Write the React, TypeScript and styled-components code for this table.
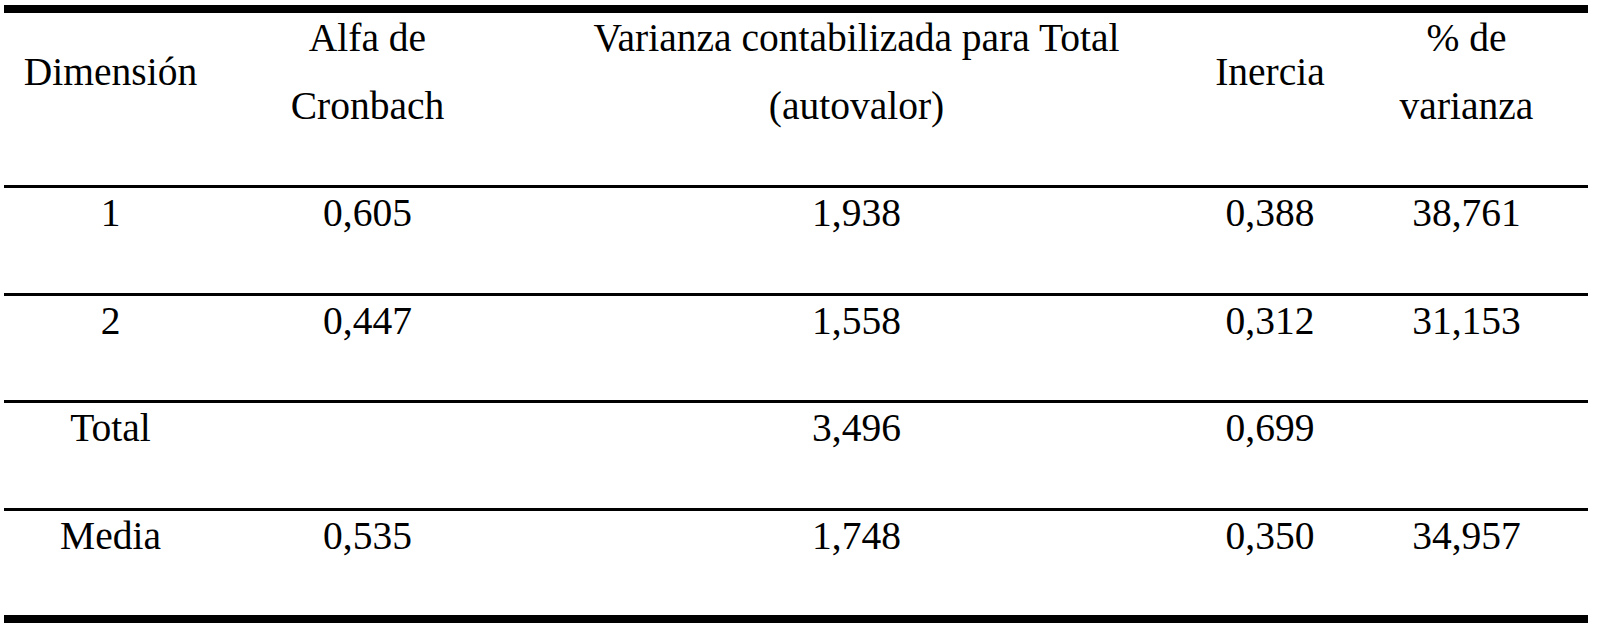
import styled, { createGlobalStyle } from 'styled-components';

const GlobalStyle = createGlobalStyle`
  body {
    margin: 0;
    background: #fff;
    color: #000;
    font-family: 'Liberation Serif', 'Times New Roman', serif;
  }
`;

const columns = '213px 301px 677px 150px 243px';

const Table = styled.div`
  width: 1584px;
  margin: 5px 0 0 4px;
  border-top: 8px solid #000;
  border-bottom: 8px solid #000;
`;

const HeadRow = styled.div`
  display: grid;
  grid-template-columns: ${columns};
  height: 172px;
  overflow: hidden;
`;

const Row = styled.div`
  display: grid;
  grid-template-columns: ${columns};
  height: 104.5px;
  border-top: 3px solid #000;
  overflow: hidden;
`;

const HeadCell = styled.div`
  display: flex;
  align-items: center;
  justify-content: center;
  height: 136px;
  margin-top: -9px;
  font-size: 39.5px;
  line-height: 68px;
  text-align: center;
`;

const Cell = styled.div`
  margin-top: -9px;
  font-size: 39.5px;
  line-height: 68px;
  text-align: center;
`;

const headers = [
  ['Dimensión'],
  ['Alfa de', 'Cronbach'],
  ['Varianza contabilizada para Total', '(autovalor)'],
  ['Inercia'],
  ['% de', 'varianza'],
];

const rows = [
  ['1', '0,605', '1,938', '0,388', '38,761'],
  ['2', '0,447', '1,558', '0,312', '31,153'],
  ['Total', '', '3,496', '0,699', ''],
  ['Media', '0,535', '1,748', '0,350', '34,957'],
];

function App() {
  return (
    <>
      <GlobalStyle />
      <Table>
        <HeadRow>
          {headers.map((lines, i) => (
            <HeadCell key={i}>
              <div>
                {lines.map((l, j) => (
                  <div key={j}>{l}</div>
                ))}
              </div>
            </HeadCell>
          ))}
        </HeadRow>
        {rows.map((r, i) => (
          <Row key={i}>
            {r.map((v, j) => (
              <Cell key={j}>{v}</Cell>
            ))}
          </Row>
        ))}
      </Table>
    </>
  );
}

export default App;
